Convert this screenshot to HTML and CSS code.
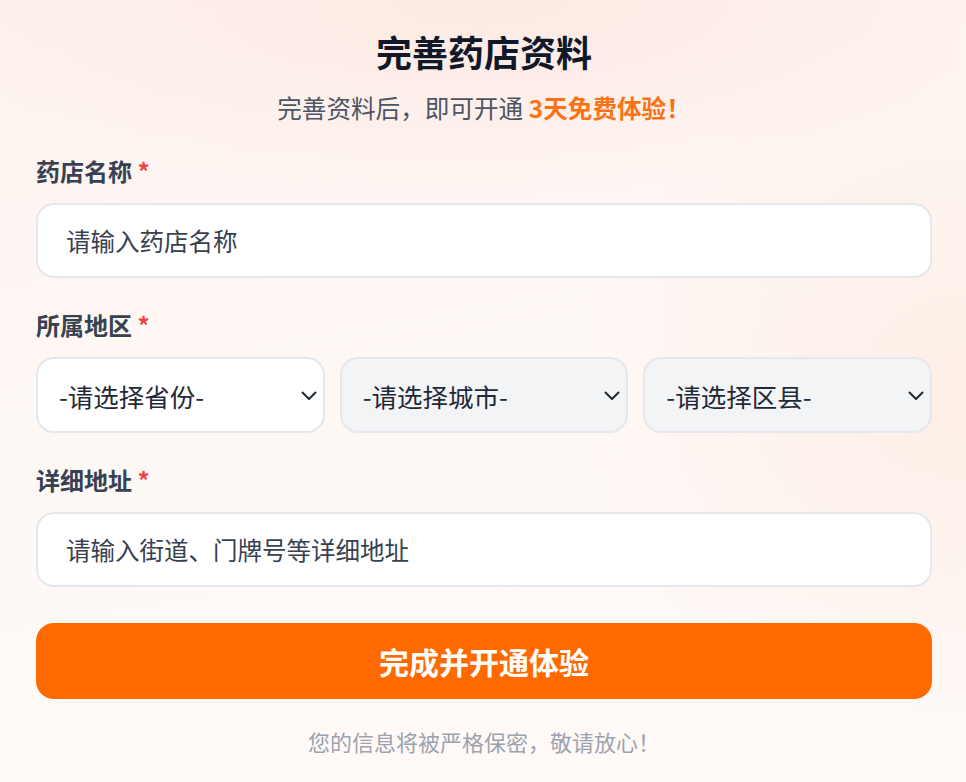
FILE: index.html
```html
<!DOCTYPE html>
<html lang="zh-CN">
<head>
<meta charset="utf-8">
<title>完善药店资料</title>
<link rel="stylesheet" href="styles.css">
</head>
<body>
<main class="page">
  <header class="head">
    <h1 class="title">完善药店资料</h1>
    <p class="subtitle">完善资料后，即可开通 <strong class="hl">3天免费体验！</strong></p>
  </header>
  <form class="form">
    <div class="field">
      <label class="label">药店名称 <span class="req">*</span></label>
      <input class="input" type="text" placeholder="请输入药店名称">
    </div>
    <div class="field">
      <label class="label">所属地区 <span class="req">*</span></label>
      <div class="selects">
        <div class="sel-wrap">
          <select class="select"><option>-请选择省份-</option></select>
          <svg class="chev" viewBox="0 0 16 10" width="16" height="10"><path d="M1.5 1.5L8 8l6.5-6.5" fill="none" stroke="#1f2937" stroke-width="2" stroke-linecap="round" stroke-linejoin="round"/></svg>
        </div>
        <div class="sel-wrap">
          <select class="select disabled" disabled><option>-请选择城市-</option></select>
          <svg class="chev" viewBox="0 0 16 10" width="16" height="10"><path d="M1.5 1.5L8 8l6.5-6.5" fill="none" stroke="#1f2937" stroke-width="2" stroke-linecap="round" stroke-linejoin="round"/></svg>
        </div>
        <div class="sel-wrap">
          <select class="select disabled" disabled><option>-请选择区县-</option></select>
          <svg class="chev" viewBox="0 0 16 10" width="16" height="10"><path d="M1.5 1.5L8 8l6.5-6.5" fill="none" stroke="#1f2937" stroke-width="2" stroke-linecap="round" stroke-linejoin="round"/></svg>
        </div>
      </div>
    </div>
    <div class="field">
      <label class="label">详细地址 <span class="req">*</span></label>
      <input class="input" type="text" placeholder="请输入街道、门牌号等详细地址">
    </div>
    <button class="btn" type="button">完成并开通体验</button>
    <p class="note">您的信息将被严格保密，敬请放心！</p>
  </form>
</main>
</body>
</html>
```
FILE: styles.css
```css
* { box-sizing: border-box; }
html, body { margin: 0; height: 100%; }
body {
  font-family: "Noto Sans CJK SC", "Noto Sans", sans-serif;
  background:
    radial-gradient(ellipse 60% 25% at 50% 0%, #fde9e3 0%, rgba(253,233,227,0) 100%),
    radial-gradient(ellipse 40% 45% at 100% 50%, #fdeee6 0%, rgba(253,238,230,0) 100%),
    linear-gradient(170deg, #fdf2ee 0%, #fef8f5 45%, #fffaf8 100%);
  color: #1f2937;
}
.page {
  padding: 24px 34px 0 36px;
}
.head { text-align: center; }
.title {
  margin: 0;
  font-size: 36px;
  line-height: 54px;
  font-weight: 700;
  color: #111827;
}
.subtitle {
  margin: 11px 0 0;
  font-size: 24.6px;
  line-height: 36px;
  color: #4b5563;
}
.hl { color: #f97316; font-weight: 700; }
.form { display: flex; flex-direction: column; margin-top: 28px; }
.field { display: flex; flex-direction: column; margin-bottom: 29px; }
.label {
  font-size: 24px;
  line-height: 36px;
  font-weight: 700;
  color: #374151;
  margin-bottom: 14px;
}
.req { color: #ef4444; }
.input {
  height: 75px;
  border: 2px solid #e5e7eb;
  border-radius: 18px;
  background: #fff;
  padding: 0 28px;
  font-family: inherit;
  font-size: 24.5px;
  color: #1f2937;
  outline: none;
}
.input::placeholder { color: #374151; }
.selects { display: grid; grid-template-columns: repeat(3, 1fr); gap: 15px; }
.sel-wrap { position: relative; }
.select {
  width: 100%;
  height: 76px;
  appearance: none;
  -webkit-appearance: none;
  border: 2px solid #e5e7eb;
  border-radius: 18px;
  background: #fff;
  padding: 0 40px 0 21px;
  font-family: inherit;
  font-size: 25.5px;
  color: #1f2937;
  opacity: 1;
}
.select.disabled { background: #f3f4f6; color: #1f2937; }
.chev { position: absolute; right: 8px; top: 34px; }
.field:last-of-type { margin-bottom: 36px; }
.btn {
  height: 76px;
  border: none;
  border-radius: 18px;
  background: #ff6a00;
  color: #fff;
  font-family: inherit;
  font-size: 30px;
  font-weight: 700;
}
.note {
  margin: 26px 0 0;
  text-align: center;
  font-size: 22px;
  line-height: 32px;
  color: #9ca3af;
}
```
